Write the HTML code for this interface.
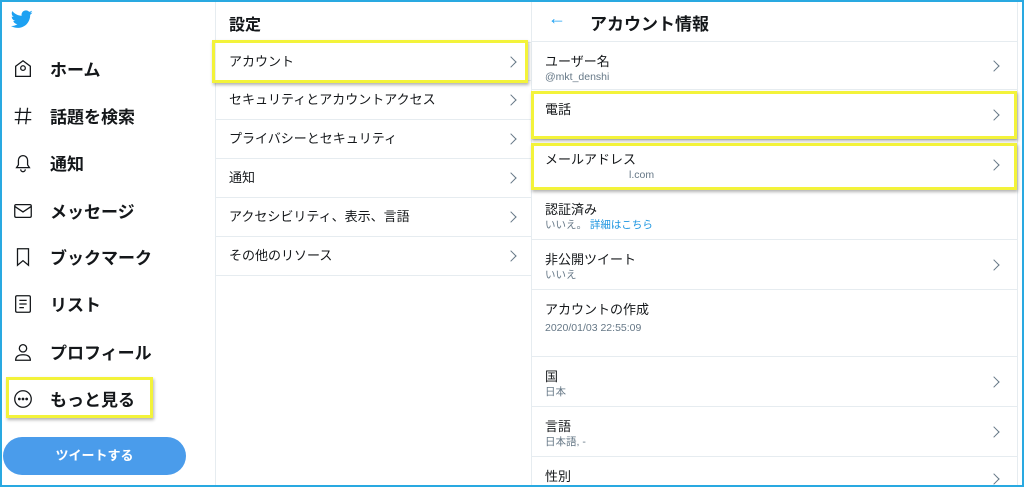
<!DOCTYPE html>
<html style="width:1024px;height:487px;overflow:hidden"><head><meta charset="utf-8"><style>
*{box-sizing:border-box;margin:0;padding:0}
body{width:1024px;height:487px;overflow:hidden;background:#fff;font-family:"Liberation Sans","Noto Sans CJK JP",sans-serif;color:#14171a;position:relative}
.frame{position:absolute;inset:0;border:2px solid #29a9e1;pointer-events:none;z-index:10}
.left{position:absolute;left:0;top:0;width:216px;height:487px;border-right:1px solid #e6ecf0}
.nav{position:absolute;left:12px;display:flex;align-items:center;font-size:17px;font-weight:bold}
.nav svg{width:22px;height:22px;margin-right:16px;fill:none;stroke:#14171a;stroke-width:1.4}
.mid{position:absolute;left:216px;top:0;width:316px;height:487px;border-right:1px solid #e6ecf0}
.mrow{position:absolute;left:0;width:315px;height:39px;border-bottom:1px solid #e6ecf0;font-size:13px;color:#14171a;padding-left:13px;line-height:38px}
.chev{position:absolute;right:16px;top:50%;width:8px;height:8px;border-right:1.2px solid #657786;border-top:1.2px solid #657786;transform:translateY(-50%) rotate(45deg)}
.right{position:absolute;left:532px;top:0;width:486px;height:487px;border-right:1px solid #e6ecf0}
.rrow{position:absolute;left:0;width:486px;border-bottom:1px solid #e6ecf0;padding:12px 0 0 13px}
.rrow .chev{right:20px}
.t{font-size:13px;line-height:16px}
.s{font-size:10.5px;color:#657786;line-height:14px}
.y{position:absolute;border:3px solid #f3f33a;box-shadow:1px 2px 3px rgba(0,0,0,.3);z-index:5}
</style></head><body>
<div class="left">
<svg style="position:absolute;left:11px;top:10px" width="22" height="19" viewBox="0 0 24 20"><path fill="#1da1f2" d="M23.6 2.4c-.9.4-1.8.6-2.8.8 1-.6 1.8-1.5 2.1-2.7-.9.6-2 1-3.1 1.2C19 .7 17.7.1 16.300.1c-2.7 0-4.8 2.2-4.8 4.8 0 .4 0 .8.1 1.1C7.5 5.800 3.9 3.900 1.5.9c-.4.7-.7 1.6-.7 2.4 0 1.7.9 3.2 2.2 4-.8 0-1.5-.2-2.2-.6v.1c0 2.3 1.7 4.3 3.900 4.7-.4.1-.8.2-1.3.2-.3 0-.6 0-.9-.1.6 1.900 2.4 3.3 4.500 3.4-1.7 1.3-3.7 2.1-6 2.1-.4 0-.8 0-1.2-.1 2.1 1.4 4.7 2.2 7.4 2.2 8.900 0 13.700-7.4 13.700-13.700v-.6c1-.7 1.800-1.5 2.500-2.5z"/></svg>
<div class="nav" style="top:56px"><svg viewBox="0 0 24 24"><path d="M4 9l8-6 8 6v11H4z"/><circle cx="12" cy="11" r="2.5"/></svg>ホーム</div>
<div class="nav" style="top:103px"><svg viewBox="0 0 24 24"><path d="M9 3L7 21M17 3l-2 18M3 8h18M3 16h18"/></svg>話題を検索</div>
<div class="nav" style="top:150px"><svg viewBox="0 0 24 24"><path d="M5 17h14l-2-3V9a5 5 0 0 0-10 0v5z"/><path d="M9.5 19a2.5 2.5 0 0 0 5 0"/></svg>通知</div>
<div class="nav" style="top:198px"><svg viewBox="0 0 24 24"><rect x="3" y="5" width="18" height="14" rx="1.5"/><path d="M3 7l9 6 9-6"/></svg>メッセージ</div>
<div class="nav" style="top:244px"><svg viewBox="0 0 24 24"><path d="M6 3h12v18l-6-5-6 5z"/></svg>ブックマーク</div>
<div class="nav" style="top:291px"><svg viewBox="0 0 24 24"><rect x="4" y="3" width="16" height="18" rx="1.5"/><path d="M8 8h8M8 12h8M8 16h5"/></svg>リスト</div>
<div class="nav" style="top:339px"><svg viewBox="0 0 24 24"><circle cx="12" cy="8" r="4"/><path d="M4 21c0-4 3-6 8-6s8 2 8 6z"/></svg>プロフィール</div>
<div class="nav" style="top:386px"><svg viewBox="0 0 24 24"><circle cx="12" cy="12" r="9"/><circle cx="8" cy="12" r=".8" fill="#14171a"/><circle cx="12" cy="12" r=".8" fill="#14171a"/><circle cx="16" cy="12" r=".8" fill="#14171a"/></svg>もっと見る</div>
<div class="y" style="left:6px;top:377px;width:147px;height:41px"></div>
<div style="position:absolute;left:3px;top:437px;width:183px;height:38px;border-radius:19px;background:#4a9ceb;color:#fff;font-size:13px;font-weight:bold;text-align:center;line-height:38px">ツイートする</div>
</div>
<div class="mid">
<div style="position:absolute;left:13px;top:11px;font-size:16px;font-weight:bold">設定</div>
<div class="mrow" style="top:42px;border-top:1px solid #e6ecf0">アカウント<i class="chev"></i></div>
<div class="mrow" style="top:81px">セキュリティとアカウントアクセス<i class="chev"></i></div>
<div class="mrow" style="top:120px">プライバシーとセキュリティ<i class="chev"></i></div>
<div class="mrow" style="top:159px">通知<i class="chev"></i></div>
<div class="mrow" style="top:198px">アクセシビリティ、表示、言語<i class="chev"></i></div>
<div class="mrow" style="top:237px">その他のリソース<i class="chev"></i></div>
</div>
<div class="y" style="left:212px;top:40px;width:316px;height:43px"></div>
<div class="right">
<div style="position:absolute;left:16px;top:8px;color:#1da1f2;font-size:18px">←</div>
<div style="position:absolute;left:58px;top:10px;font-size:17px;font-weight:bold">アカウント情報</div>
<div class="rrow" style="top:41px;height:49px;border-top:1px solid #e6ecf0"><div class="t">ユーザー名</div><div class="s">@mkt_denshi</div><i class="chev"></i></div>
<div class="rrow" style="top:90px;height:50px"><div class="t">電話</div><i class="chev"></i></div>
<div class="rrow" style="top:140px;height:50px"><div class="t">メールアドレス</div><div class="s" style="padding-left:84px">l.com</div><i class="chev"></i></div>
<div class="rrow" style="top:190px;height:50px"><div class="t">認証済み</div><div class="s">いいえ。 <span style="color:#1b95e0">詳細はこちら</span></div></div>
<div class="rrow" style="top:240px;height:50px"><div class="t">非公開ツイート</div><div class="s">いいえ</div><i class="chev"></i></div>
<div class="rrow" style="top:290px;height:67px"><div class="t">アカウントの作成</div><div class="s" style="margin-top:3px">2020/01/03 22:55:09</div></div>
<div class="rrow" style="top:357px;height:50px"><div class="t">国</div><div class="s">日本</div><i class="chev"></i></div>
<div class="rrow" style="top:407px;height:50px"><div class="t">言語</div><div class="s">日本語, -</div><i class="chev"></i></div>
<div class="rrow" style="top:457px;height:30px;border-bottom:none"><div class="t">性別</div><i class="chev" style="top:22px"></i></div>
</div>
<div class="y" style="left:531px;top:91px;width:486px;height:48px"></div>
<div class="y" style="left:531px;top:143px;width:486px;height:47px"></div>
<div class="frame"></div>
</body></html>
